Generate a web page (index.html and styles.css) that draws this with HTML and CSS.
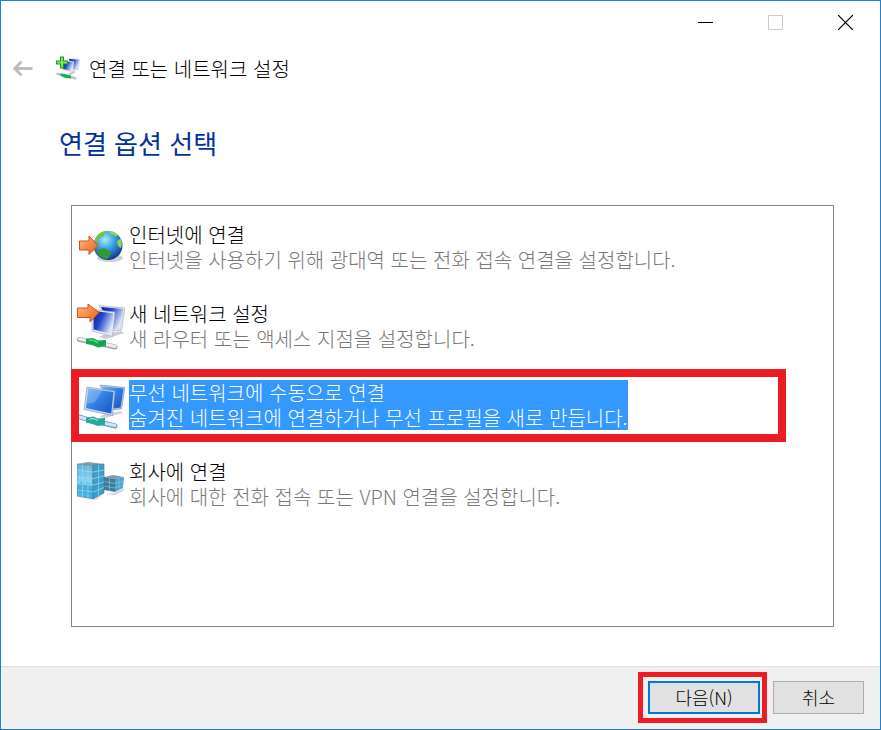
FILE: index.html
```html
<!DOCTYPE html>
<html lang="ko">
<head>
    <meta charset="UTF-8">
    <meta name="viewport" content="width=device-width, initial-scale=1.0">
    <title>연결 또는 네트워크 설정</title>
    <link rel="stylesheet" href="styles.css">
</head>
<body>

    <!-- Shared gradients -->
    <svg class="defs" aria-hidden="true">
        <defs>
            <linearGradient id="orange" x1="0" y1="0" x2="1" y2="1">
                <stop offset="0" stop-color="#ffc08a"/>
                <stop offset="0.5" stop-color="#f58a48"/>
                <stop offset="1" stop-color="#e8601c"/>
            </linearGradient>
            <radialGradient id="sea" cx="0.4" cy="0.3" r="0.7">
                <stop offset="0" stop-color="#a8ecfa"/>
                <stop offset="0.45" stop-color="#3da5dc"/>
                <stop offset="1" stop-color="#1836a0"/>
            </radialGradient>
            <linearGradient id="navy" x1="0" y1="0" x2="1" y2="0.5">
                <stop offset="0" stop-color="#0a1a9c"/>
                <stop offset="0.45" stop-color="#2748cc"/>
                <stop offset="1" stop-color="#dce8fc"/>
            </linearGradient>
            <linearGradient id="blue" x1="0" y1="0" x2="1" y2="1">
                <stop offset="0" stop-color="#6fb0f2"/>
                <stop offset="0.5" stop-color="#2f7be0"/>
                <stop offset="1" stop-color="#1a55c0"/>
            </linearGradient>
            <linearGradient id="glass" x1="0" y1="0" x2="0" y2="1">
                <stop offset="0" stop-color="#5fb4dc"/>
                <stop offset="0.5" stop-color="#7fd6f7"/>
                <stop offset="1" stop-color="#35b0e6"/>
            </linearGradient>
        </defs>
    </svg>

    <div class="window">
        <div class="titlebar">
            <button class="caption-btn" aria-label="최소화">
                <svg width="15" height="15" viewBox="0 0 15 15"><path d="M0 7.5h15" stroke="#000"/></svg>
            </button>
            <button class="caption-btn" aria-label="최대화" disabled>
                <svg width="15" height="15" viewBox="0 0 15 15"><path d="M.5.5h14v14H.5z" fill="none" stroke="#ccc"/></svg>
            </button>
            <button class="caption-btn" aria-label="닫기">
                <svg width="15" height="15" viewBox="0 0 15 15"><path d="M0 0l15 15M15 0L0 15" stroke="#000" stroke-width="1.2"/></svg>
            </button>
        </div>

        <header class="header">
            <button class="back-btn" aria-label="뒤로" disabled>
                <svg width="20" height="16" viewBox="0 0 20 16"><path d="M19.500 8.500H2M8.500 1.500L1.800 8.500l6.700 7" fill="none" stroke="#bdbdbd" stroke-width="2.800"/></svg>
            </button>
            <svg class="app-icon" width="24" height="24" viewBox="0 0 24 24" aria-hidden="true">
                <path d="M12 2l12 1-1.500 11-6 1z" fill="#d5dae2"/>
                <path d="M13 3l10 .8-1.300 9.200-5 .6z" fill="url(#navy)"/>
                <path d="M6 4l12 1.500-1 11L6 14z" fill="#e2e5ea"/>
                <path d="M7 5l10 1.300-.9 9L7 13z" fill="url(#navy)"/>
                <path d="M11 18l7-3 2 1-5 3z" fill="#c4c8cc"/>
                <path d="M1.500 18l5 1M14 21l5.500 1.300" stroke="#b9c4c6" stroke-width="2.500" stroke-linecap="round"/>
                <path d="M4 17.500l5 .5 6 1.500v3l-6-.5-4-2z" fill="#1fae55"/>
                <path d="M4 .5h4v4h4v4H8v4H4v-4H0v-4h4z" fill="#189a18"/>
                <path d="M5 1.500h2v4h4v2H7v4H5v-4H1v-2h4z" fill="#8be06a"/>
            </svg>
            <span class="header-title">연결 또는 네트워크 설정</span>
        </header>

        <main class="content">
            <h1>연결 옵션 선택</h1>

            <ul class="options">
                <li>
                    <button class="option">
                        <svg class="option-icon" width="48" height="48" viewBox="0 0 48 48" aria-hidden="true">
                            <ellipse cx="33" cy="35" rx="13" ry="4" fill="#9aa0a8" opacity="0.5"/>
                            <circle cx="31" cy="22.500" r="14.500" fill="url(#sea)"/>
                            <path d="M18 18c1-5 5-9 10-10l3 1-3 1.500-2 3-4 2-2 4-2 1z" fill="#6cc644"/>
                            <path d="M32 8c4 0 7 2 9 4l-2 1.500-3-2-3-1z" fill="#8fd860"/>
                            <path d="M41 17l3-1c1 3 1 6 0 9l-2-1-2-4z" fill="#8ad858"/>
                            <path d="M21 27l6-2 5 3 3 1-2 4-3 3c-4 0-8-3-10-6z" fill="#2f9a35"/>
                            <path d="M2.500 18H12v-5l9 9.500-9 9v-4.500H2.500z" fill="url(#orange)" stroke="#c95518"/>
                        </svg>
                        <span class="option-text">
                            <span class="option-title">인터넷에 연결</span>
                            <span class="option-desc">인터넷을 사용하기 위해 광대역 또는 전화 접속 연결을 설정합니다.</span>
                        </span>
                    </button>
                </li>
                <li>
                    <button class="option">
                        <svg class="option-icon" width="48" height="48" viewBox="0 0 48 48" aria-hidden="true">
                            <path d="M22 3.500L48 6l-3.500 22L34 29z" fill="#dfe2e8" stroke="#a4aab4" stroke-width="0.600"/>
                            <path d="M24 5l22 2-3 19.500-7 .5z" fill="url(#navy)"/>
                            <path d="M22 35l6-3 16-3 3 2-18 6z" fill="#c9ccd2"/>
                            <path d="M15 7.500l23 2.500-2.500 24.500L15 29z" fill="#e9ebef" stroke="#9ca3ae" stroke-width="0.600"/>
                            <path d="M16.500 9l20 2.300L34.500 32l-18-4.500z" fill="url(#navy)"/>
                            <path d="M2.500 37.500l10 2M27 42.500l11 2.500" stroke="#9aa8aa" stroke-width="5" stroke-linecap="round"/>
                            <path d="M2.500 37l10 2M27 42l11 2.500" stroke="#e7eeee" stroke-width="3" stroke-linecap="round"/>
                            <path d="M9 37l7-1 5 2.500 8-.5v6l-8 1.500-6-2.500-6-1z" fill="#18a64c"/>
                            <path d="M12 38.500l4-.5 5 3" fill="none" stroke="#6fe096" stroke-width="1.200"/>
                            <path d="M.5 6H11V2l11 8.500L13 20v-4.500H.5z" fill="url(#orange)" stroke="#c95518"/>
                        </svg>
                        <span class="option-text">
                            <span class="option-title">새 네트워크 설정</span>
                            <span class="option-desc">새 라우터 또는 액세스 지점을 설정합니다.</span>
                        </span>
                    </button>
                </li>
                <li class="marked">
                    <button class="option selected">
                        <svg class="option-icon" width="48" height="48" viewBox="0 0 48 48" aria-hidden="true">
                            <path d="M23 4l25 2.500L44.500 28 34 29z" fill="#a9c6ea" stroke="#7f93ae" stroke-width="0.600"/>
                            <path d="M25 5.500l21.500 2-3 19-8 1z" fill="url(#blue)"/>
                            <path d="M22 36l6-3 15-3 3 2-18 5z" fill="#cfd4da"/>
                            <path d="M10 6l28 4-2.500 24.500L7 28.500z" fill="#c2d8f2" stroke="#7f93ae" stroke-width="0.600"/>
                            <path d="M11.500 7.500l25 3.500-2.300 21.500L9 27z" fill="url(#blue)"/>
                            <path d="M11.500 7.500l14 2-8 12-7.500 1z" fill="#a9d2fb" opacity="0.350"/>
                            <path d="M3 36l9 3M26 42l12 3" stroke="#6f9cc0" stroke-width="5" stroke-linecap="round"/>
                            <path d="M3 36l9 3M26 42l12 2.500" stroke="#cbe6f6" stroke-width="3" stroke-linecap="round"/>
                            <path d="M9 37l7-1.500 5 2 7-.5v7l-7 1-6-2-6-1.500z" fill="#2aa898"/>
                            <path d="M12 38.500l4-1 5 2" fill="none" stroke="#8fe0d2" stroke-width="1.200"/>
                        </svg>
                        <span class="option-text">
                            <span class="option-title">무선 네트워크에 수동으로 연결</span>
                            <span class="option-desc">숨겨진 네트워크에 연결하거나 무선 프로필을 새로 만듭니다.</span>
                        </span>
                    </button>
                </li>
                <li>
                    <button class="option">
                        <svg class="option-icon" width="48" height="48" viewBox="0 0 48 48" aria-hidden="true">
                            <path d="M16 40l12-6 9-1 11-5-3 4-8 3-9-1-9 6z" fill="#b4b8bd" opacity="0.600"/>
                            <path d="M27 17l9-2 11 2-9 2z" fill="#8a9aa6"/>
                            <path d="M27 17l11 2v13l-11-2z" fill="#3c7c9c"/>
                            <path d="M38 19l9-2-1 11-8 4z" fill="#4aa4d0"/>
                            <path d="M27 21.500l11 2 8.500-2.500M27 26l11 2 8.500-3M32.500 18v13M42 18v12" fill="none" stroke="#a3c8da" stroke-width="0.600"/>
                            <path d="M0 4l11-2 16 2-11 1.500z" fill="#8b9aa5"/>
                            <path d="M0 4l16 1.500V39L0 36z" fill="url(#glass)" stroke="#5b7888" stroke-width="0.600"/>
                            <path d="M16 5.500L27 4v29l-11 6z" fill="#3a9fd0" stroke="#4a6878" stroke-width="0.600"/>
                            <path d="M0 25l5-4 3 4 3-3 5 6v7L0 32z" fill="#2697cf" opacity="0.500"/>
                            <path d="M0 10.500l16 1.500 11-2M0 17l16 1.500 11-2.500M0 23.500L16 25l11-3M0 30l16 2 11-4.500" fill="none" stroke="#b2d6e4" stroke-width="0.700"/>
                            <path d="M5.500 4.500V37M11 5v33M21.500 5v31" stroke="#b2d6e4" stroke-width="0.600"/>
                        </svg>
                        <span class="option-text">
                            <span class="option-title">회사에 연결</span>
                            <span class="option-desc">회사에 대한 전화 접속 또는 VPN 연결을 설정합니다.</span>
                        </span>
                    </button>
                </li>
            </ul>
        </main>

        <footer class="footer">
            <div class="next-wrap">
                <button class="btn btn-default">다음(N)</button>
            </div>
            <button class="btn">취소</button>
        </footer>
    </div>

</body>
</html>
```
FILE: styles.css
```css
/* General Styles */
* {
    box-sizing: border-box;
}

body {
    margin: 0;
    font-family: "Noto Sans CJK KR", "Noto Sans", sans-serif;
    font-weight: 300;
    font-size: 20px;
    color: #000;
    background-color: #fff;
}

button {
    font: inherit;
    color: inherit;
    padding: 0;
    border: none;
    background: none;
}

svg {
    display: block;
    flex: none;
}

.defs {
    position: absolute;
    width: 0;
    height: 0;
}

.window {
    display: flex;
    flex-direction: column;
    min-height: 100vh;
    border: 1px solid #1883d7;
}

/* Title bar */
.titlebar {
    display: flex;
    justify-content: flex-end;
}

.caption-btn {
    display: flex;
    justify-content: center;
    align-items: center;
    width: 70px;
    height: 43px;
}

/* Header */
.header {
    display: flex;
    align-items: center;
    height: 48px;
    padding-left: 12px;
}

.back-btn {
    margin-right: 23px;
}

.header-title {
    margin-left: 9px;
}

/* Content */
.content {
    display: flex;
    flex-direction: column;
    flex: 1;
    padding: 31px 46px 39px 58px;
}

h1 {
    margin: 0 0 42px;
    font-size: 26px;
    font-weight: 400;
    line-height: 40px;
    color: #003399;
}

.options {
    flex: 1;
    display: flex;
    flex-direction: column;
    gap: 29px;
    margin: 0 0 0 12px;
    padding: 16px 0;
    border: 1px solid #828790;
    list-style: none;
}

.option {
    display: flex;
    align-items: center;
    gap: 4px;
    width: 100%;
    padding-left: 5px;
    text-align: left;
}

.option-text {
    line-height: 25px;
}

.option-title,
.option-desc {
    display: block;
}

.option-desc {
    color: #787878;
}

.selected .option-text {
    background-color: #3399ff;
}

.selected .option-title,
.selected .option-desc {
    color: #fff;
}

/* Red frames drawn over the steps to follow */
.marked,
.next-wrap {
    position: relative;
}

.marked::after,
.next-wrap::after {
    content: "";
    position: absolute;
    pointer-events: none;
}

.marked::after {
    inset: -11px 47px -12px -1px;
    border: 8px solid #ed1c24;
}

.next-wrap::after {
    inset: -9px -7px -9px -10px;
    border: 5px solid #ed1c24;
}

/* Footer */
.footer {
    display: flex;
    justify-content: flex-end;
    gap: 13px;
    padding: 14px 16px 15px;
    background-color: #f0f0f0;
    border-top: 1px solid #dfdfdf;
}

.btn {
    display: block;
    width: 91px;
    height: 33px;
    font-size: 18px;
    line-height: 29px;
    background-color: #e1e1e1;
    border: 1px solid #adadad;
}

.btn-default {
    width: 112px;
    border: 2px solid #0078d7;
}
```
